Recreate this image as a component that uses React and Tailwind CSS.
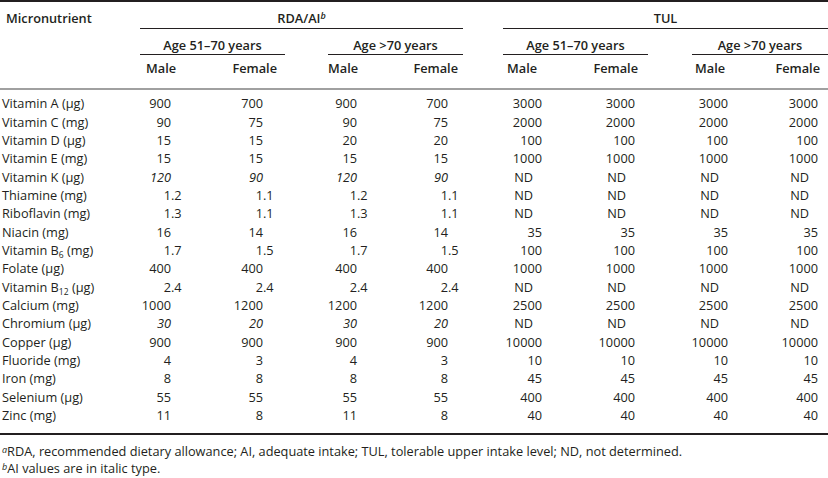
import React from 'react'

const rows = [
  ['Vitamin A (μg)', ['900', '700', '900', '700', '3000', '3000', '3000', '3000']],
  ['Vitamin C (mg)', ['90', '75', '90', '75', '2000', '2000', '2000', '2000']],
  ['Vitamin D (μg)', ['15', '15', '20', '20', '100', '100', '100', '100']],
  ['Vitamin E (mg)', ['15', '15', '15', '15', '1000', '1000', '1000', '1000']],
  ['Vitamin K (μg)', ['*120', '*90', '*120', '*90', 'ND', 'ND', 'ND', 'ND']],
  ['Thiamine (mg)', ['1.2', '1.1', '1.2', '1.1', 'ND', 'ND', 'ND', 'ND']],
  ['Riboflavin (mg)', ['1.3', '1.1', '1.3', '1.1', 'ND', 'ND', 'ND', 'ND']],
  ['Niacin (mg)', ['16', '14', '16', '14', '35', '35', '35', '35']],
  [['Vitamin B', '6', ' (mg)'], ['1.7', '1.5', '1.7', '1.5', '100', '100', '100', '100']],
  ['Folate (μg)', ['400', '400', '400', '400', '1000', '1000', '1000', '1000']],
  [['Vitamin B', '12', ' (μg)'], ['2.4', '2.4', '2.4', '2.4', 'ND', 'ND', 'ND', 'ND']],
  ['Calcium (mg)', ['1000', '1200', '1200', '1200', '2500', '2500', '2500', '2500']],
  ['Chromium (μg)', ['*30', '*20', '*30', '*20', 'ND', 'ND', 'ND', 'ND']],
  ['Copper (μg)', ['900', '900', '900', '900', '10000', '10000', '10000', '10000']],
  ['Fluoride (mg)', ['4', '3', '4', '3', '10', '10', '10', '10']],
  ['Iron (mg)', ['8', '8', '8', '8', '45', '45', '45', '45']],
  ['Selenium (μg)', ['55', '55', '55', '55', '400', '400', '400', '400']],
  ['Zinc (mg)', ['11', '8', '11', '8', '40', '40', '40', '40']],
]

// widths between the right edges of the integer parts
const cellW = ['w-[31px]', 'w-[92px]', 'w-[94px]', 'w-[91px]', 'w-[94px]', 'w-[93px]', 'w-[93px]', 'w-[90px]']

function Value({ v, w }) {
  if (v === 'ND') {
    return <div className={`${w} shrink-0 text-right pr-[9px]`}>ND</div>
  }
  const italic = v.startsWith('*')
  const s = italic ? v.slice(1) : v
  const [int, frac] = s.split('.')
  return (
    <div className={`${w} shrink-0 flex justify-end ${italic ? 'italic' : ''}`}>
      <span>{int}</span>
      <span className="w-0 whitespace-nowrap">{frac ? '.' + frac : ''}</span>
    </div>
  )
}

function Label({ l }) {
  if (Array.isArray(l)) {
    return (
      <span>
        {l[0]}
        <span className="text-[8.5px] leading-none relative top-[3px]">{l[1]}</span>
        {l[2]}
      </span>
    )
  }
  return <span>{l}</span>
}

function Sub({ title, cls, male, female }) {
  return (
    <div className={cls}>
      <div className="pt-[9px] pb-[2px] text-center border-b border-[#231f20]">{title}</div>
      <div className="flex justify-between pt-[6px] pb-[13px]">
        <span className={male}>Male</span>
        <span className={female}>Female</span>
      </div>
    </div>
  )
}

export default function App() {
  return (
    <div
      className="w-[828px] h-[478px] bg-white text-[#231f20] text-[12.75px] leading-[14px]"
      style={{ fontFamily: '"Open Sans", "Liberation Sans", sans-serif' }}
    >
      <div className="border-t-2 border-[#231f20]" />
      {/* header */}
      <div className="flex font-semibold border-b-2 border-[#a0a0a0]">
        <div className="w-[140px] shrink-0 pl-[6px] pt-[9px]">Micronutrient</div>
        <div className="w-[323px] shrink-0">
          <div className="pt-[9px] pb-[3px] text-center border-b border-[#231f20]">
            RDA/AI<span className="italic text-[9px] leading-none relative -top-[4px]">b</span>
          </div>
          <div className="flex">
            <Sub title="Age 51–70 years" cls="w-[145px]" male="pl-[6px]" female="pr-[8px]" />
            <div className="w-[43px]" />
            <Sub title="Age >70 years" cls="w-[135px]" male="pl-0" female="pr-[5px]" />
          </div>
        </div>
        <div className="w-[40px] shrink-0" />
        <div className="w-[325px] shrink-0">
          <div className="pt-[9px] pb-[3px] text-center border-b border-[#231f20]">TUL</div>
          <div className="flex">
            <Sub title="Age 51–70 years" cls="w-[145px]" male="pl-[4px]" female="pr-[10px]" />
            <div className="w-[44px]" />
            <Sub title="Age >70 years" cls="w-[136px]" male="pl-[3px]" female="pr-[8px]" />
          </div>
        </div>
      </div>
      {/* body */}
      <div className="pt-[4px] pb-[9px] border-b-2 border-[#231f20]">
        {rows.map(([l, vals], i) => (
          <div key={i} className="flex h-[18.35px] items-center">
            <div className="w-[140px] shrink-0 pl-[2px] whitespace-nowrap">
              <Label l={l} />
            </div>
            {vals.map((v, j) => (
              <Value key={j} v={v} w={cellW[j]} />
            ))}
          </div>
        ))}
      </div>
      {/* notes */}
      <div className="pt-[8px] pl-[2px] leading-[17px]">
        <div>
          <span className="italic text-[9px] leading-none relative -top-[3px]">a</span>RDA, recommended dietary allowance; AI, adequate intake; TUL, tolerable upper intake level; ND, not determined.
        </div>
        <div>
          <span className="italic text-[9px] leading-none relative -top-[3px]">b</span>AI values are in italic type.
        </div>
      </div>
    </div>
  )
}
